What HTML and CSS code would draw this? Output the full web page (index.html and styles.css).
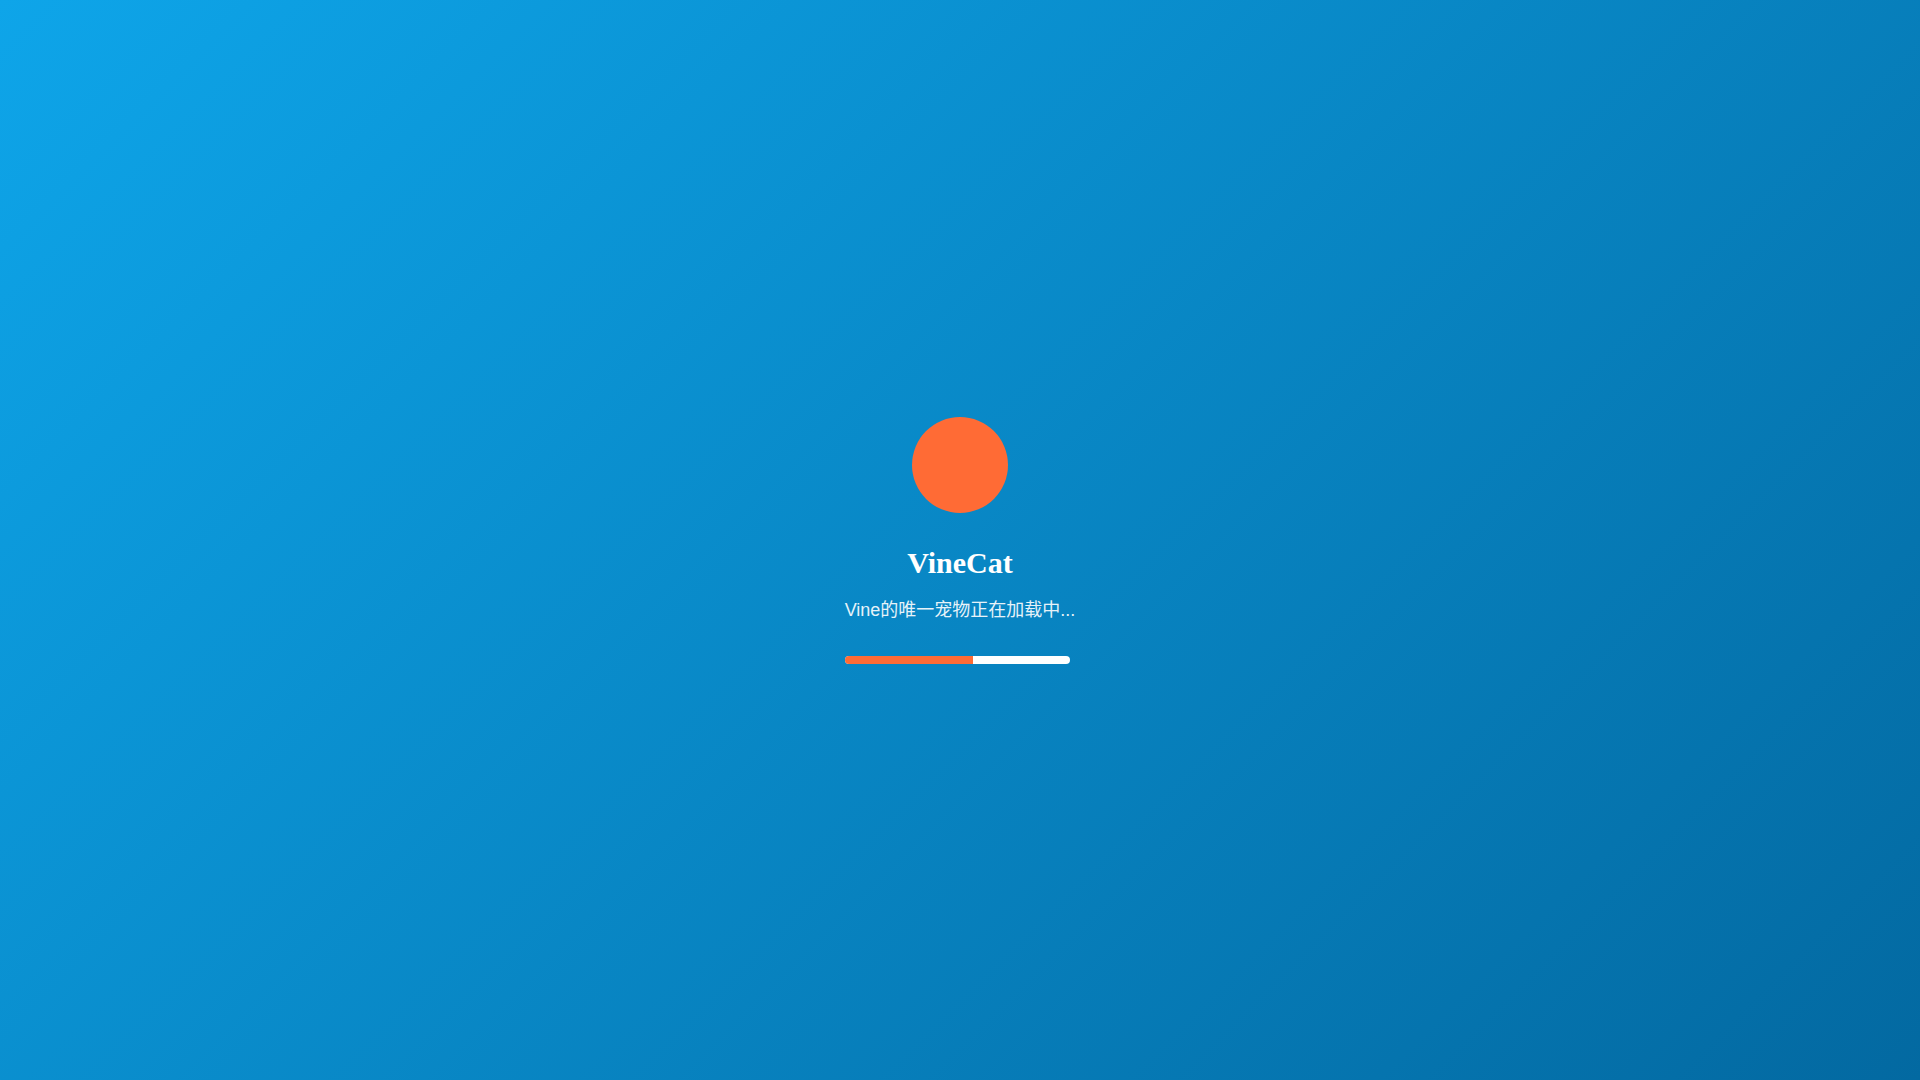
FILE: index.html
```html
<!DOCTYPE html>
<html lang="zh-CN">
<head>
<meta charset="utf-8">
<title>VineCat</title>
<link rel="stylesheet" href="styles.css">
</head>
<body>
<main class="loader">
  <div class="loader-content">
    <div class="logo"></div>
    <h1 class="title">VineCat</h1>
    <p class="subtitle">Vine的唯一宠物正在加载中...</p>
    <div class="progress"><div class="progress-fill" style="width: 57%"></div></div>
  </div>
</main>
</body>
</html>
```

FILE: styles.css
```css
html, body {
  margin: 0;
  padding: 0;
  height: 100%;
}
body {
  background: linear-gradient(135deg, #0ea5e9 0%, #0369a1 100%);
  font-family: "Liberation Sans", "Noto Sans CJK SC", sans-serif;
  color: #ffffff;
}
.loader {
  height: 100%;
  display: flex;
  align-items: center;
  justify-content: center;
}
.loader-content {
  display: flex;
  flex-direction: column;
  align-items: center;
}
.logo {
  width: 96px;
  height: 96px;
  border-radius: 50%;
  background: #ff6b35;
  margin-bottom: 32px;
}
.title {
  font-family: "Liberation Serif", serif;
  font-weight: bold;
  font-size: 30px;
  line-height: 36px;
  margin: 0 0 18px;
}
.subtitle {
  font-size: 18px;
  line-height: 22px;
  margin: 0 0 35px;
  opacity: 0.9;
}
.progress {
  align-self: flex-start;
  width: 225px;
  height: 8px;
  border-radius: 4px;
  background: #ffffff;
  overflow: hidden;
}
.progress-fill {
  height: 100%;
  background: #ff6b35;
}
```
